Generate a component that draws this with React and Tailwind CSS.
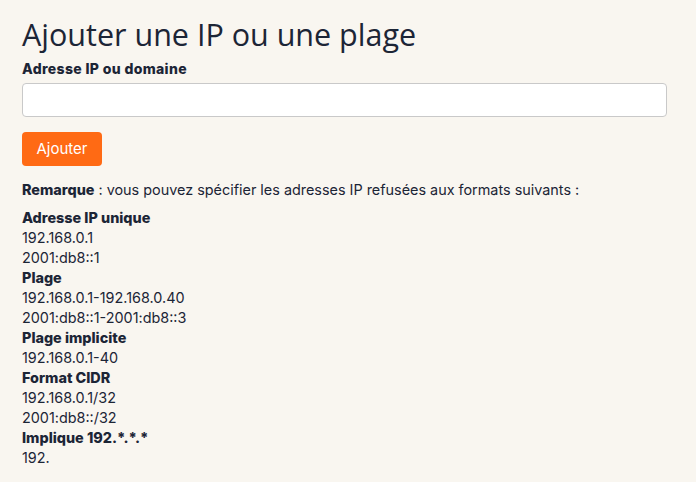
export default function App() {
  const body = { fontFamily: "Inter, 'Noto Sans', sans-serif" };
  const items = [
    ["Adresse IP unique", ["192.168.0.1", "2001:db8::1"]],
    ["Plage", ["192.168.0.1-192.168.0.40", "2001:db8::1-2001:db8::3"]],
    ["Plage implicite", ["192.168.0.1-40"]],
    ["Format CIDR", ["192.168.0.1/32", "2001:db8::/32"]],
    ["Implique 192.*.*.*", ["192."]],
  ];
  return (
    <div className="min-h-[482px] w-full bg-[#f9f6f0] text-[#1c2536] px-[22px] pt-[14px]" style={body}>
      <h1 className="text-[30.5px] leading-[40px] text-[#1c2536]" style={{ fontFamily: "'Open Sans', sans-serif" }}>
        Ajouter une IP ou une plage
      </h1>
      <div className="mt-[6px] text-[14px] font-extrabold leading-[18px] tracking-[0.35px]">Adresse IP ou domaine</div>
      <input className="mt-[5px] block w-[645px] h-[34px] bg-white border border-[#c9c9c9] rounded-[4px]" />
      <button className="mt-[15px] h-[34px] w-[80px] rounded-[4px] bg-[#ff6a14] text-white text-[15px]">Ajouter</button>
      <p className="mt-[14px] text-[14.4px] leading-[20px]">
        <span className="font-extrabold">Remarque</span> : vous pouvez spécifier les adresses IP refusées aux formats suivants :
      </p>
      <div className="mt-[8px] text-[14.4px] leading-[20px]">
        {items.map(([t, vals]) => (
          <div key={t}>
            <div className="font-extrabold">{t}</div>
            {vals.map((v) => (
              <div key={v}>{v}</div>
            ))}
          </div>
        ))}
      </div>
    </div>
  );
}
